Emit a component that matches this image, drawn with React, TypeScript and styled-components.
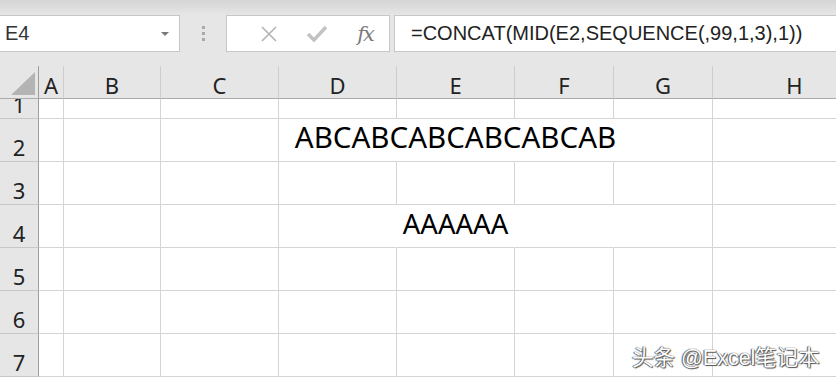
import React from 'react'
import styled, { createGlobalStyle } from 'styled-components'

const GlobalStyle = createGlobalStyle`
  html, body { margin: 0; padding: 0; background: #ffffff; }
  body { overflow: hidden; }
  * { box-sizing: border-box; }
`

const Page = styled.div`
  position: relative;
  width: 836px;
  height: 377px;
  overflow: hidden;
  display: flex;
  flex-direction: column;
  background: #e6e6e6;
  font-family: "Noto Sans", "Open Sans", sans-serif;
`

const TopShade = styled.div`
  height: 15px;
  background: linear-gradient(#d5d5d5, #e6e6e6);
`

const Toolbar = styled.div`
  height: 37px;
  display: flex;
  align-items: stretch;
`

const Box = styled.div`
  background: #ffffff;
  border: 1px solid #c6c6c6;
  display: flex;
  align-items: center;
`

const NameBox = styled(Box)`
  width: 181px;
  margin-left: -1px;
  padding: 0 0 0 5px;
  justify-content: space-between;
  font-family: "Liberation Sans", Arial, sans-serif;
  font-size: 20px;
  color: #333333;
`

const Caret = styled.span`
  width: 0;
  height: 0;
  margin-right: 10px;
  border-left: 4px solid transparent;
  border-right: 4px solid transparent;
  border-top: 4px solid #7a7a7a;
`

const Grip = styled.div`
  width: 46px;
  display: flex;
  flex-direction: column;
  align-items: center;
  justify-content: center;
  gap: 3px;
  span {
    width: 3px;
    height: 3px;
    background: #a9a9a9;
  }
`

const FxGroup = styled(Box)`
  width: 164px;
  padding: 0 0 0 18px;
`

const FxSlot = styled.div`
  width: 54px;
  display: flex;
  justify-content: center;
  align-items: center;
`

const FxLabel = styled.span`
  font-family: "DejaVu Serif", "Liberation Serif", serif;
  font-style: italic;
  font-size: 21px;
  color: #7b7b7b;
  letter-spacing: -2px;
`

const FormulaBox = styled(Box)`
  flex: 1;
  margin-left: 4px;
  margin-right: -1px;
  padding-left: 16px;
  font-family: "Liberation Sans", Arial, sans-serif;
  font-size: 20px;
  color: #222222;
  white-space: nowrap;
`

const Gap = styled.div`
  height: 14px;
`

const Sheet = styled.div`
  flex: 1;
  display: grid;
  grid-template-columns: 39px 25px 97px 118px 118px 118px 99px 99px 164px;
  grid-template-rows: 33px 20px repeat(6, 43px);
  background: #ffffff;
`

const Corner = styled.div`
  background: #e6e6e6;
  border-right: 1px solid #9c9c9c;
  border-bottom: 1px solid #ababab;
  position: relative;
  &::after {
    content: "";
    position: absolute;
    left: 11px;
    top: 6px;
    width: 0;
    height: 0;
    border-left: 24px solid transparent;
    border-bottom: 23px solid #b4b4b4;
  }
`

const ColHead = styled.div`
  background: #e6e6e6;
  border-right: 1px solid #cdcdcd;
  border-bottom: 1px solid #ababab;
  display: flex;
  align-items: flex-end;
  justify-content: center;
  padding-bottom: 2px;
  font-size: 22px;
  line-height: 1;
  color: #222222;
`

const RowHead = styled.div`
  background: #e6e6e6;
  border-right: 1px solid #9c9c9c;
  border-bottom: 1px solid #c8c8c8;
  display: flex;
  align-items: flex-end;
  justify-content: center;
  padding-bottom: 3px;
  font-size: 22px;
  line-height: 1;
  color: #222222;
  overflow: hidden;
`

const Cell = styled.div<{ $flush?: boolean; $size?: number; $lift?: number }>`
  border-right: 1px solid ${p => (p.$flush ? 'transparent' : '#d4d4d4')};
  border-bottom: 1px solid #d4d4d4;
  display: flex;
  align-items: flex-end;
  justify-content: center;
  white-space: nowrap;
  font-size: ${p => p.$size ?? 22}px;
  line-height: 1;
  color: #000000;
  padding-bottom: ${p => p.$lift ?? 0}px;
  position: relative;
  z-index: ${p => (p.$size ? 1 : 0)};
`

const Watermark = styled.div`
  position: absolute;
  left: 632px;
  top: 340px;
  font-family: "Liberation Sans", "Noto Sans CJK SC", sans-serif;
  font-size: 21.5px;
  color: #ffffff;
  white-space: nowrap;
  text-shadow: 0 0 1px #3a3a3a, 1px 1px 1px #555555, -1px 0 1px #666666;
`

const columns = ['A', 'B', 'C', 'D', 'E', 'F', 'G', 'H']

const rows: { n: number; text?: string; size?: number; lift?: number }[] = [
  { n: 1 },
  { n: 2, text: 'ABCABCABCABCABCAB', size: 29.5, lift: 10 },
  { n: 3 },
  { n: 4, text: 'AAAAAA', size: 27.5, lift: 10 },
  { n: 5 },
  { n: 6 },
  { n: 7 },
]

const CrossIcon = () => (
  <svg width="20" height="20" viewBox="0 0 20 20">
    <path d="M3 3 L17 17 M17 3 L3 17" stroke="#b3b3b3" strokeWidth="1.6" fill="none" />
  </svg>
)

const CheckIcon = () => (
  <svg width="22" height="20" viewBox="0 0 22 20">
    <path d="M2 10 L8 16 L20 3" stroke="#c2c2c2" strokeWidth="3.4" fill="none" />
  </svg>
)

export default function App() {
  return (
    <Page>
      <GlobalStyle />
      <TopShade />
      <Toolbar>
        <NameBox>
          E4
          <Caret />
        </NameBox>
        <Grip>
          <span />
          <span />
          <span />
        </Grip>
        <FxGroup>
          <FxSlot><CrossIcon /></FxSlot>
          <FxSlot><CheckIcon /></FxSlot>
          <FxSlot><FxLabel>fx</FxLabel></FxSlot>
        </FxGroup>
        <FormulaBox>=CONCAT(MID(E2,SEQUENCE(,99,1,3),1))</FormulaBox>
      </Toolbar>
      <Gap />
      <Sheet>
        <Corner />
        {columns.map(c => (
          <ColHead key={c}>{c}</ColHead>
        ))}
        {rows.map(r => (
          <React.Fragment key={r.n}>
            <RowHead>{r.n}</RowHead>
            {columns.map(c => {
              const spill = !!r.text && (c === 'D' || c === 'E' || c === 'F')
              const owner = !!r.text && c === 'E'
              return (
                <Cell
                  key={c}
                  $flush={spill}
                  $size={owner ? r.size : undefined}
                  $lift={owner ? r.lift : undefined}
                >
                  {owner ? r.text : null}
                </Cell>
              )
            })}
          </React.Fragment>
        ))}
      </Sheet>
      <Watermark>头条 @Excel笔记本</Watermark>
    </Page>
  )
}
